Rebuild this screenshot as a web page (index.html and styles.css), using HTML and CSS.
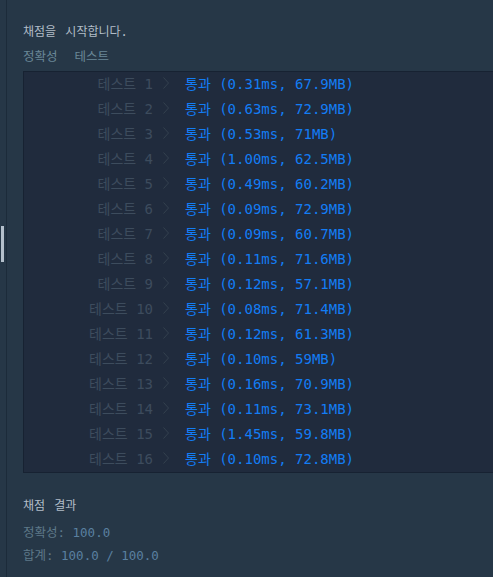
FILE: index.html
```html
<!DOCTYPE html>
<html lang="ko">
	<head>
		<meta charset="UTF-8" />
		<meta name="viewport" content="width=device-width, initial-scale=1.0" />
		<title>채점 결과</title>
		<link rel="stylesheet" href="styles.css">
	</head>
	<body>
		<div class="layout">
			<!-- 왼쪽 스크롤 영역 -->
			<div class="gutter">
				<div class="thumb"></div>
			</div>

			<!-- 채점 출력 -->
			<main class="console">
				<p class="console-title">채점을 시작합니다.</p>
				<div class="tabs">
					<span class="tab">정확성</span>
					<span class="tab">테스트</span>
				</div>

				<div class="result-box" id="result-box"></div>

				<p class="console-title summary-title">채점 결과</p>
				<p class="score"><span class="score-label">정확성:</span> <span class="score-value">100.0</span></p>
				<p class="score"><span class="score-label">합계:</span> <span class="score-value">100.0 / 100.0</span></p>
			</main>
		</div>

		<script>
			document.addEventListener("DOMContentLoaded", () => {
				const results = [
					"0.31ms, 67.9MB",
					"0.63ms, 72.9MB",
					"0.53ms, 71MB",
					"1.00ms, 62.5MB",
					"0.49ms, 60.2MB",
					"0.09ms, 72.9MB",
					"0.09ms, 60.7MB",
					"0.11ms, 71.6MB",
					"0.12ms, 57.1MB",
					"0.08ms, 71.4MB",
					"0.12ms, 61.3MB",
					"0.10ms, 59MB",
					"0.16ms, 70.9MB",
					"0.11ms, 73.1MB",
					"1.45ms, 59.8MB",
					"0.10ms, 72.8MB",
				];
				const box = document.getElementById("result-box");

				// 테스트 결과 행 만들기
				results.forEach((result, i) => {
					const row = document.createElement("div");
					row.className = "result-row";
					row.innerHTML =
						'<span class="case-name">테스트 ' + (i + 1) + "</span>" +
						'<svg class="chevron" width="6" height="12" viewBox="0 0 6 12"><path d="M0.5 0.5 L5.5 6 L0.5 11.5" fill="none" stroke="currentColor" stroke-width="1"/></svg>' +
						'<span class="case-result">통과 (' + result + ")</span>";
					box.appendChild(row);
				});
			});
		</script>
	</body>
</html>
```

FILE: styles.css
```css
/* 기본 스타일 */
html,
body {
	margin: 0;
	padding: 0;
	width: 100%;
	height: 100%;
	overflow: hidden;
	background-color: #263747;
	font-family: "DejaVu Sans Mono", "Noto Sans CJK KR", monospace;
}

.layout {
	display: flex;
	height: 100%;
}

/* 왼쪽 스크롤 영역 */
.gutter {
	width: 6px;
	flex-shrink: 0;
	padding-top: 226px;
	border-right: 1px solid #1c2b3a;
}

.thumb {
	width: 3px;
	height: 36px;
	margin-left: 1px;
	background-color: #b4c0cc;
}

/* 콘솔 */
.console {
	flex: 1;
	padding-left: 16px;
	padding-top: 22px;
	min-width: 0;
}

.console p {
	margin: 0;
}

.console-title {
	font-size: 12px;
	line-height: 20px;
	color: #b2bdc8;
	word-spacing: 2px;
}

.tabs {
	display: flex;
	gap: 17px;
	margin-top: 5px;
	font-size: 12.5px;
	line-height: 20px;
	color: #6a8797;
}

/* 결과 박스 */
.result-box {
	margin-top: 4px;
	background-color: #202b3d;
	border: 1px solid #172232;
	border-right: none;
}

.result-row {
	display: flex;
	align-items: center;
	box-sizing: border-box;
	height: 25px;
	padding-bottom: 3px;
	font-size: 14px;
	white-space: nowrap;
}

.case-name {
	width: 129px;
	text-align: right;
	color: #3d4c5d;
}

.chevron {
	margin-left: 10px;
	color: #34414f;
}

.case-result {
	margin-left: 16px;
	color: #137df5;
}

/* 채점 결과 */
.summary-title {
	margin-top: 23px !important;
}

.score {
	font-size: 12.5px;
	line-height: 23px;
}

.summary-title + .score {
	margin-top: 5px !important;
}

.score-label {
	color: #5e7989;
}

.score-value {
	color: #5a80a0;
}
```
